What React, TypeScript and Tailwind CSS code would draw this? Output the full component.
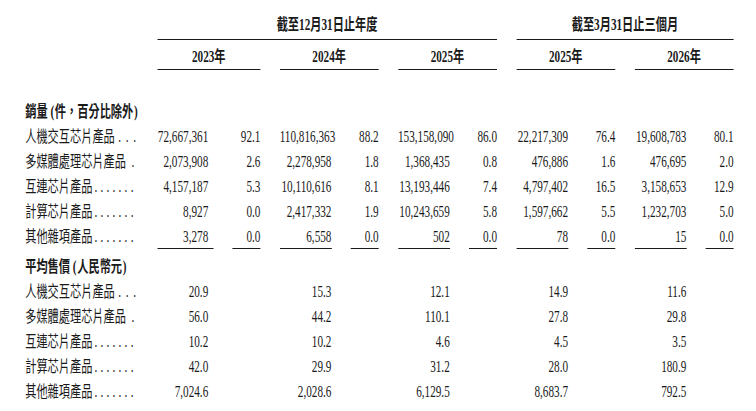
import React from "react";

type Leader = { dots: string; className: string };

const leaders: Record<string, Leader> = {
    "人機交互芯片產品": { dots: "...", className: "ml-[5px] tracking-[6.7px]" },
    "多媒體處理芯片產品": { dots: ".", className: "ml-[8px]" },
    "互連芯片產品": { dots: ".......", className: "ml-[3px] tracking-[4.6px]" },
    "計算芯片產品": { dots: ".......", className: "ml-[3px] tracking-[4.6px]" },
    "其他雜項產品": { dots: ".......", className: "ml-[3px] tracking-[4.6px]" },
};

const sales: string[][] = [
    ["人機交互芯片產品", "72,667,361", "92.1", "110,816,363", "88.2", "153,158,090", "86.0", "22,217,309", "76.4", "19,608,783", "80.1"],
    ["多媒體處理芯片產品", "2,073,908", "2.6", "2,278,958", "1.8", "1,368,435", "0.8", "476,886", "1.6", "476,695", "2.0"],
    ["互連芯片產品", "4,157,187", "5.3", "10,110,616", "8.1", "13,193,446", "7.4", "4,797,402", "16.5", "3,158,653", "12.9"],
    ["計算芯片產品", "8,927", "0.0", "2,417,332", "1.9", "10,243,659", "5.8", "1,597,662", "5.5", "1,232,703", "5.0"],
    ["其他雜項產品", "3,278", "0.0", "6,558", "0.0", "502", "0.0", "78", "0.0", "15", "0.0"],
];

const prices: string[][] = [
    ["人機交互芯片產品", "20.9", "15.3", "12.1", "14.9", "11.6"],
    ["多媒體處理芯片產品", "56.0", "44.2", "110.1", "27.8", "29.8"],
    ["互連芯片產品", "10.2", "10.2", "4.6", "4.5", "3.5"],
    ["計算芯片產品", "42.0", "29.9", "31.2", "28.0", "180.9"],
    ["其他雜項產品", "7,024.6", "2,028.6", "6,129.5", "8,683.7", "792.5"],
];

const years = ["2023年", "2024年", "2025年", "2025年", "2026年"];

function Label({ text }: { text: string }) {
    const leader = leaders[text];
    return (
        <div className="h-[25px] flex items-center pl-[36px] whitespace-nowrap">
            <span>{text}</span>
            <span className={leader.className}>{leader.dots}</span>
        </div>
    );
}

function SectionTitle({ head, note, className }: { head: string; note: string; className?: string }) {
    return (
        <div className={`col-span-full h-[25px] leading-[25px] pl-[36px] font-bold whitespace-nowrap ${className ?? ""}`}>
            {head}
            <span className="ml-[4px] mr-[1px]">(</span>
            {note}
            <span className="ml-[1px]">)</span>
        </div>
    );
}

export default function App() {
    return (
        <div className="w-[756px] h-[411px] overflow-hidden bg-white">
            <div className="w-[1080px] origin-top-left scale-x-70 pt-[15px] text-[16px] text-[#1a1a1a] font-['Liberation_Serif','Noto_Sans_CJK_TC',serif]">
                <div className="grid grid-cols-[197px_80px_40px_74px_40px_74px_40px_74px_40px_74px_40px] gap-x-[27.5px]">
                    {/* period headers */}
                    <div />
                    <div className="col-span-6 text-center font-bold leading-[20px] pb-[4px] border-b border-[#1a1a1a]">
                        截至12月31日止年度
                    </div>
                    <div className="col-span-4 text-center font-bold leading-[20px] pb-[4px] border-b border-[#1a1a1a]">
                        截至3月31日止三個月
                    </div>

                    {/* year headers */}
                    <div />
                    {years.map((y, i) => (
                        <div
                            key={i}
                            className="col-span-2 text-center font-bold leading-[20px] pt-[7px] pb-[2px] border-b border-[#1a1a1a]"
                        >
                            {y}
                        </div>
                    ))}

                    {/* sales volume */}
                    <SectionTitle head="銷量" note="件，百分比除外" className="mt-[29px]" />
                    {sales.map((row, r) => {
                        const last = r === sales.length - 1;
                        return (
                            <React.Fragment key={row[0]}>
                                <Label text={row[0]} />
                                {row.slice(1).map((v, i) => (
                                    <div
                                        key={i}
                                        className={`h-[25px] leading-[25px] text-right whitespace-nowrap ${i === 0 ? "pr-[7px]" : ""} ${last ? "border-b border-[#1a1a1a]" : ""}`}
                                    >
                                        {v}
                                    </div>
                                ))}
                            </React.Fragment>
                        );
                    })}

                    {/* average selling price */}
                    <SectionTitle head="平均售價" note="人民幣元" className="mt-[5px]" />
                    {prices.map((row) => (
                        <React.Fragment key={row[0]}>
                            <Label text={row[0]} />
                            {row.slice(1).map((v, i) => (
                                <React.Fragment key={i}>
                                    <div
                                        className={`h-[25px] leading-[25px] text-right whitespace-nowrap ${i === 0 ? "pr-[7px]" : ""}`}
                                    >
                                        {v}
                                    </div>
                                    <div />
                                </React.Fragment>
                            ))}
                        </React.Fragment>
                    ))}
                </div>
            </div>
        </div>
    );
}
